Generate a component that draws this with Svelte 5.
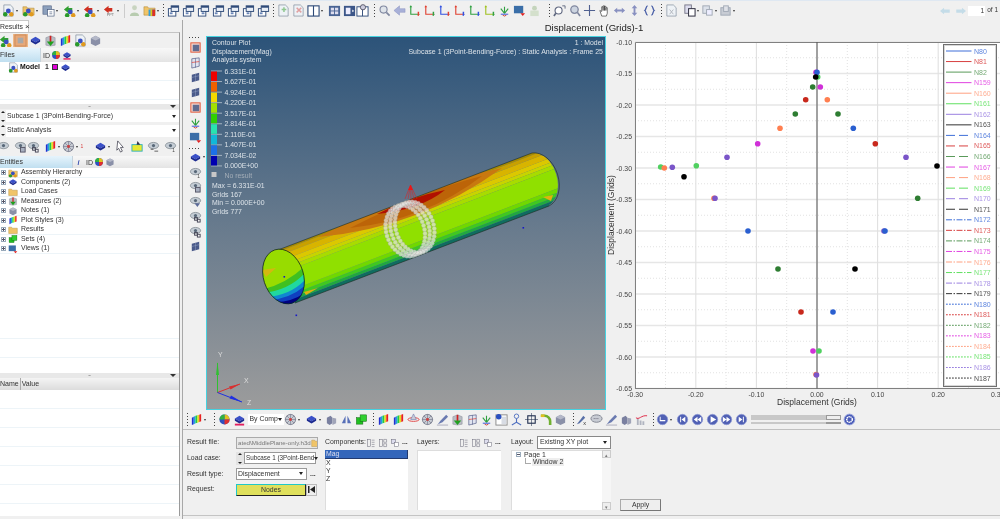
<script>
	// small toolbar glyphs, all on a 14x14 box
	const mol = (x = 0, y = 0) =>
		`<g transform="translate(${x} ${y})"><circle cx="3.5" cy="10" r="2.4" fill="#2a9a2a"/><circle cx="10" cy="10" r="2.4" fill="#e09a20"/><circle cx="6.8" cy="6.5" r="2.6" fill="#3a50c0"/></g>`;
	const folder = '<path d="M1 3h4l1 1.5h7V12H1z" fill="#f0c468" stroke="#b08838" stroke-width=".6"/>';
	const arrow = (c) => `<path d="M1 6l5-4v2.2h4V8H6v2z" fill="${c}"/>`;
	const win = (n = 0) =>
		`<rect x="1.5" y="5" width="8" height="8" fill="#fff" stroke="#2e4a78"/><rect x="4.5" y="2" width="8" height="6" fill="#e8eef6" stroke="#2e4a78"/><rect x="4.5" y="2" width="8" height="2" fill="#2e4a78"/><rect x="${3 + n}" y="9" width="3" height="2" fill="#6a86b8"/>`;
	const fence =
		'<path d="M2 5l2-1v8l-2 1z" fill="#2030d0"/><path d="M4 4l2-1v8l-2 1z" fill="#20a0e0"/><path d="M6 3l2-.6v8L6 11z" fill="#20d040"/><path d="M8 2.4l2-.6v8l-2 .6z" fill="#e8d820"/><path d="M10 1.8l2-.8v8l-2 .8z" fill="#e82020"/>';
	const cube = '<path d="M7 3l5 3-5 3-5-3z" fill="#3a50c8"/><path d="M2 6v2.4l5 3 5-3V6L7 9z" fill="#1c2a90"/>';
	const grayCube = '<path d="M7 2l5 2.5v6L7 13l-5-2.5v-6z" fill="#8a90a8"/><path d="M7 2l5 2.5L7 7 2 4.5z" fill="#b4b8c8"/>';
	const wire =
		'<circle cx="7" cy="7" r="5.5" fill="#c8ccd4" stroke="#555a70" stroke-width=".7"/><path d="M1.5 7h11M7 1.5v11M3 3l8 8M11 3l-8 8" stroke="#555a70" stroke-width=".5"/><circle cx="7" cy="7" r="1.6" fill="#d04040"/>';
	const eye = '<ellipse cx="7" cy="6" rx="5.5" ry="3.4" fill="#c4ccd4" stroke="#707880" stroke-width=".7"/><circle cx="7" cy="6" r="1.7" fill="#586878"/>';
	const page = '<path d="M2 1h7l3 3v9H2z" fill="#eef2f6" stroke="#7a8898" stroke-width=".7"/>';
	const axis = (a, b) =>
		`<path d="M3 2v9h9" fill="none" stroke="${a}" stroke-width="1.2"/><path d="M12 9l-1 0v4" stroke="${b}" stroke-width="1.2" fill="none"/><path d="M3 1.5l-1.5 2h3z" fill="${a}"/><path d="M12.8 11l-2-1.5v3z" fill="${b}"/>`;
	const play = (d) =>
		`<circle cx="7" cy="7" r="5.6" fill="#5060b4" stroke="#8c98d4" stroke-width=".8"/><path d="${d}" fill="#fff"/>`;
	const list =
		'<rect x="2" y="2" width="4" height="10" fill="none" stroke="#667" stroke-width=".7"/><path d="M8 3h4M8 6h4M8 9h4M8 12h4" stroke="#667" stroke-width=".7"/>';

	const icons = {
		mol: page + mol(0, 1),
		fmol: folder + mol(0, 1),
		folder,
		save: '<rect x="1" y="2" width="9" height="9" fill="#8ca0bc" stroke="#46587a" stroke-width=".6"/><rect x="6" y="6" width="7" height="7" fill="#fff" stroke="#46587a" stroke-width=".7"/><path d="M8 8.5h3M8 10.5h3" stroke="#46587a" stroke-width=".7"/>',
		garrow: arrow('#30a030') + mol(1, 2),
		rarrow: arrow('#d03020') + mol(1, 2),
		rppt: arrow('#d03020') + '<text x="4" y="13" font-size="4" fill="#666">PPT</text>',
		person: '<circle cx="7" cy="4" r="2.6" fill="#c8d4c0"/><path d="M2 13c0-5 10-5 10 0z" fill="#b8ccb0"/>',
		cfold: folder + '<path d="M6 6h7v7H6z" fill="#30a0e0"/><path d="M8 6h2v7H8z" fill="#e0c820"/><path d="M10 6h3v7h-3z" fill="#e03020"/>',
		win1: win(0),
		win2: win(1),
		win3: win(2),
		fadeg: page + '<path d="M5 6h5M7.5 3.500v5" stroke="#90c890" stroke-width="1.6"/>',
		fader: page + '<path d="M5 4l5 5M10 4l-5 5" stroke="#e0a0a0" stroke-width="1.6"/>',
		split: '<rect x="1" y="2" width="12" height="11" fill="#fff" stroke="#2e4a78" stroke-width="1.2"/><path d="M7 2v11" stroke="#2e4a78" stroke-width="1.2"/>',
		panes: '<rect x="1" y="2" width="12" height="11" fill="#4a6494"/><rect x="3" y="4" width="3.500" height="3" fill="#dde"/><rect x="7.500" y="4" width="3.500" height="3" fill="#dde"/><rect x="3" y="8" width="3.500" height="3" fill="#dde"/><rect x="7.500" y="8" width="3.500" height="3" fill="#dde"/>',
		pane2: '<rect x="1" y="2" width="12" height="11" fill="#3c5688"/><rect x="3" y="4" width="5" height="7" fill="#eef"/><path d="M10 6l2 1.500-2 1.500z" fill="#fff"/>',
		pane3: '<rect x="1" y="3" width="12" height="10" fill="#fff" stroke="#2e4a78"/><path d="M7 3v10" stroke="#2e4a78"/><circle cx="7.500" cy="3.500" r="2.800" fill="#ccd" stroke="#556"/>',
		search: '<circle cx="6" cy="6" r="3.800" fill="#dfe4ea" stroke="#8088a0" stroke-width="1.2"/><path d="M9 9l3.500 3.500" stroke="#8088a0" stroke-width="1.800"/>',
		back: '<path d="M1 7l6-5v3h6v4H7v3z" fill="#a8b0d8" stroke="#8890c0" stroke-width=".5"/>',
		gr: axis('#30a040', '#e04030'),
		rr: axis('#e04030', '#30a040'),
		bb: axis('#3050e0', '#e04030'),
		rb: axis('#e04030', '#3050e0'),
		gb: axis('#30a040', '#3050e0'),
		yg: axis('#a0c020', '#30a040'),
		tri: '<path d="M7 3v7M7 10l-4-5M7 10l4-5" stroke="#30a040" stroke-width="1.200" fill="none"/><path d="M3 11h8" stroke="#3050e0"/><path d="M5 12l2 1 2-1" stroke="#d04030" fill="none"/>',
		view: '<rect x="1" y="2" width="10" height="8" fill="#3a6ea8"/><path d="M8 10h5l-2.500 3z" fill="#e02020"/>',
		pers: '<circle cx="7" cy="4.500" r="2.600" fill="#c4d4bc"/><rect x="2.500" y="7" width="9" height="6" fill="#d4e0cc"/>',
		zoomb: '<circle cx="6" cy="7" r="3.800" fill="#fff" stroke="#606880" stroke-width="1.200"/><path d="M3 10l-2 3" stroke="#606880" stroke-width="1.800"/><path d="M10 2h3v3" stroke="#606880" fill="none"/>',
		zoomc: '<circle cx="7" cy="6" r="4" fill="#ccd4e0" stroke="#8088a0" stroke-width="1.400"/><path d="M10 9l3 4" stroke="#8088a0" stroke-width="1.800"/>',
		cross: '<path d="M7 1v12M1 7h12" stroke="#506090" stroke-width="1.200"/>',
		hand: '<path d="M4 13L2 7l2 1V3h1.500v4V2H7v5V2.500h1.500V7V4H10v6l-1 3z" fill="#fff" stroke="#333" stroke-width=".7"/>',
		horiz: '<path d="M1 7l3.500-3v2h5V4L13 7l-3.500 3V8h-5v2z" fill="#8890c0"/>',
		vert: '<path d="M7 1l3 3.500H8v5h2L7 13 4 9.500h2v-5H4z" fill="#8890c0"/>',
		brace: '<path d="M5 2C3 2 3.500 6 2 7c1.500 1 1 5 3 5M9 2c2 0 1.500 4 3 5-1.500 1-1 5-3 5" fill="none" stroke="#4a60a8" stroke-width="1.400"/>',
		cut: page + '<path d="M5 6l4 5M9 6l-4 5" stroke="#b0b4bc"/>',
		copy: '<rect x="2" y="1" width="7" height="9" fill="#dde" stroke="#778"/><rect x="6" y="5" width="7" height="8" fill="#fff" stroke="#334" stroke-width="1.100"/>',
		fade1: '<rect x="2" y="2" width="7" height="8" fill="#dde2ea" stroke="#a0a8b4"/><rect x="6" y="6" width="6" height="6" fill="#eef" stroke="#a0a8b4"/>',
		fade2: '<rect x="2" y="4" width="10" height="8" fill="#c8ccd4" stroke="#a0a8b4"/><rect x="5" y="2" width="5" height="6" fill="#e0e2e8" stroke="#a0a8b4"/>',
		block: '<rect x="1" y="1" width="12" height="12" fill="#e8a878" stroke="#c88858"/><path d="M4 4h6v6H4z" fill="#a8a8a8"/>',
		corner: '<path d="M3 11V7h3L12 3v7z" fill="#a8b0c0" stroke="#606880" stroke-width=".6"/><path d="M1 8l3 4 6-3" stroke="#20a040" stroke-width="1.800" fill="none"/>',
		red: '<path d="M2 4l5-2 5 2v8l-5 1-5-1z" fill="#b8bcc4" stroke="#808490" stroke-width=".5"/><path d="M7 2v7" stroke="#d02020" stroke-width="1.800"/><path d="M3 8h8l-4 5z" fill="#20a020"/>',
		fence,
		grid: '<path d="M3 3l8-1v9l-8 2z" fill="#e0e4f0" stroke="#303c70" stroke-width=".6"/><path d="M3 7l8-1" stroke="#e83020" stroke-width=".7"/><path d="M7 2.500v10" stroke="#303c70" stroke-width=".5"/>',
		gridr: '<rect x="2" y="2" width="10" height="10" fill="#f4d8d0" stroke="#e05030"/><path d="M4 4h7v7H4z" fill="#606c90"/>',
		gridb: '<path d="M3 4l8-2v8l-8 2z" fill="#4a5a8a"/><path d="M7 3v8M3 7l8-2" stroke="#98a8c8" stroke-width=".5"/>',
		cube,
		wire,
		gcube: grayCube,
		eye,
		eye1: eye + '<text x="9" y="13" font-size="5" fill="#444">1</text>',
		eye2: eye + '<path d="M4 10h3M8 12h4" stroke="#333" stroke-width=".8"/>',
		eye3: eye + '<rect x="7" y="8" width="5" height="5" fill="#a8b0c0" stroke="#556"/>',
		eye4: eye + '<path d="M6 9h6l-3 4z" fill="#5a6a98"/>',
		eye5: eye + '<rect x="6" y="8" width="3" height="3" fill="none" stroke="#445"/><rect x="9" y="10" width="3" height="3" fill="none" stroke="#445"/>',
		ball: '<circle cx="7" cy="7" r="5.500" fill="#3050c0"/><path d="M7 1.500a5.500 5.500 0 0 1 5.500 5.500H7z" fill="#e0c020"/><path d="M12.500 7A5.500 5.500 0 0 1 7 12.500V7z" fill="#e03030"/><path d="M1.500 7A5.500 5.500 0 0 1 7 1.500V7z" fill="#30b040"/>',
		cuber: cube + '<rect x="2" y="11.500" width="10" height="2" fill="#e02060"/>',
		cursor: '<path d="M4 1l6 7H7l2 4-2 1-2-4-2 2z" fill="#fff" stroke="#223" stroke-width=".7"/>',
		yellow: '<rect x="1" y="5" width="11" height="7" fill="#e8e830" stroke="#30b0c0"/><path d="M7 1l3 4H6z" fill="#334"/>',
		cubes: '<path d="M2 5l4-2 2 2v6l-3 2-3-2z" fill="#7a80a0"/><path d="M8 5l4 1v5l-4 2z" fill="#a0a4b8"/>',
		sym: '<path d="M6 3L2 11h4zM8 3l4 8H8z" fill="#5870b8"/>',
		green: '<rect x="1.500" y="5" width="7" height="7" fill="#20c020" stroke="#106010" stroke-width=".5"/><rect x="5.500" y="2" width="7" height="7" fill="#30d030" stroke="#106010" stroke-width=".5"/>',
		rb3: '<ellipse cx="7" cy="7" rx="6" ry="2" fill="none" stroke="#e04040"/><path d="M7 1l3 6H4z" fill="#c8ccd8" stroke="#5060a0" stroke-width=".5"/>',
		pen: '<path d="M2 12l3-4 6-6 2 2-6 6z" fill="#6a7ab0"/><path d="M1 13h12" stroke="#aab"/>',
		info: '<rect x="1" y="2" width="12" height="11" fill="#fff" stroke="#888"/><rect x="7" y="4" width="5" height="8" fill="#d8dce4"/><circle cx="4" cy="4" r="3" fill="#2a50c0"/>',
		tri2: '<circle cx="7" cy="3.500" r="2.400" fill="none" stroke="#5070c0"/><path d="M7 6v4L2 13M7 10l5 3" stroke="#5070c0" stroke-width="1.200" fill="none"/>',
		sq: '<rect x="3" y="3" width="8" height="8" fill="none" stroke="#223050" stroke-width="1.200"/><path d="M7 0v14M0 7h14" stroke="#223050" stroke-width=".6"/>',
		pipe: '<path d="M2 3h4a6 6 0 0 1 6 6v4" fill="none" stroke="#70b030" stroke-width="2.800"/><path d="M2 3h4" stroke="#e0c020" stroke-width="2.800"/>',
		bubble: '<ellipse cx="7" cy="6" rx="6" ry="4" fill="#c8ccd4" stroke="#808490"/><path d="M4 6h6" stroke="#667" stroke-dasharray="1 1"/>',
		fx: '<path d="M2 12l7-9 2 2-6 6z" fill="#5870a8"/><text x="9" y="13" font-size="6" fill="#333">x</text>',
		plot: '<path d="M2 13V6h2v7zM5 13V8h2v5zM8 13V9h2v4z" fill="#b0b4c0"/><path d="M1 5c3 3 6-3 12-2" stroke="#e02040" fill="none"/>',
		tl: play('M5 4v3.500h5V9H4V4z'),
		prev: play('M4.500 4h1v6h-1zM10 4v6L6 7z'),
		rew: play('M7 4v6L3 7zM11 4v6L7 7z'),
		pl: play('M5 3.500v7L11 7z'),
		ff: play('M3 4v6l4-3zM7 4v6l4-3z'),
		next: play('M4 4v6l4-3zM8.500 4h1v6h-1z'),
		gear: '<circle cx="7" cy="7" r="5.800" fill="#4a5cb8" stroke="#98a4dc"/><circle cx="7" cy="7" r="3" fill="none" stroke="#fff" stroke-width="1.600" stroke-dasharray="1.500 .6"/>',
		l1: list,
		l2: '<rect x="2" y="2" width="4" height="10" fill="none" stroke="#667" stroke-width=".7"/><path d="M8 2h4v4H8zM8 8h4v4H8z" fill="none" stroke="#667" stroke-width=".7"/>',
		l3: '<rect x="2" y="2" width="6" height="6" fill="#dde" stroke="#667" stroke-width=".7"/><rect x="6" y="6" width="6" height="6" fill="#fff" stroke="#667" stroke-width=".7"/>'
	};

	const topGroups = [
		{ cell: 'w20', items: ['mol', 'fmol', 'save', 'garrow', 'rarrow', 'rppt'], drop: true },
		{ cell: 'w15', items: ['person', 'cfold'], drop: false },
		{ cell: 'w15', items: ['win1', 'win2', 'win3', 'win1', 'win2', 'win3', 'win1'] },
		{ cell: 'w15', items: ['fadeg', 'fader', 'split', 'panes', 'pane2', 'pane3'] },
		{ cell: 'w15', items: ['search', 'back', 'gr', 'rr', 'bb', 'rb', 'gb', 'yg', 'tri', 'view', 'pers'] },
		{ cell: 'w15', items: ['zoomb', 'zoomc', 'cross', 'hand', 'horiz', 'vert', 'brace'] },
		{ cell: 'w18', items: ['cut', 'copy', 'fade1', 'fade2'] }
	];
	const panelTools = ['garrow', 'block', 'cube', 'red', 'fence', 'mol', 'gcube'];
	// widths keep the uneven spacing of this bar
	const subTools = [
		{ k: 'eye', w: 17 },
		{ k: 'eye3', w: 13 },
		{ k: 'eye5', w: 17 },
		{ k: 'fence', w: 18, drop: true },
		{ k: 'wire', w: 32, drop: true, num: true },
		{ k: 'cube', w: 20, drop: true },
		{ k: 'cursor', w: 17 },
		{ k: 'yellow', w: 16 },
		{ k: 'eye2', w: 17 },
		{ k: 'eye1', w: 15 }
	];
	const entities = [
		['fmol', 'Assembly Hierarchy'],
		['cube', 'Components (2)'],
		['folder', 'Load Cases'],
		['red', 'Measures (2)'],
		['gcube', 'Notes (1)'],
		['fence', 'Plot Styles (3)'],
		['folder', 'Results'],
		['green', 'Sets  (4)'],
		['view', 'Views (1)']
	];

	const strip = ['gridr', 'grid', 'gridb', 'gridb', 'gridr', 'tri', 'view', null, 'cube', 'eye1', 'eye3', 'eye4', 'eye5', 'eye5', 'gridb'];
	const midA = ['wire', 'cube', 'cubes', 'sym', 'green'];
	const midB = ['fence', 'fence', 'rb3', 'wire', 'pen', 'red', 'grid', 'tri', 'info', 'tri2', 'sq', 'pipe', 'gcube'];
	const midC = ['fx', 'bubble', 'pen', 'cubes', 'plot'];
	const transport = ['prev', 'rew', 'pl', 'ff', 'next'];

	// contour legend
	const bands = ['#f00000', '#f06000', '#f5d800', '#a4e000', '#30d000', '#28e4b0', '#10b8d8', '#1c70e8', '#0000b0'];
	const levels = ['6.331E-01', '5.627E-01', '4.924E-01', '4.220E-01', '3.517E-01', '2.814E-01', '2.110E-01', '1.407E-01', '7.034E-02', '0.000E+00'];

	// cylinder: A/B are the end points of the near section, D the axis
	const A = [278, 250];
	const B = [295, 303];
	const D = [254, -97];
	const at = (t, s) => [A[0] + t * (B[0] - A[0]) + s * D[0], A[1] + t * (B[1] - A[1]) + s * D[1]];
	const stripes = [
		[0, 0.035, '#a88c00'],
		[0.035, 0.1, '#c8a000'],
		[0.1, 0.2, '#d8b400'],
		[0.2, 0.28, '#dcc800'],
		[0.28, 0.34, '#c8d400'],
		[0.34, 0.41, '#a8dc00'],
		[0.41, 0.76, '#90e000'],
		[0.76, 0.83, '#70d800'],
		[0.83, 0.89, '#40c820'],
		[0.89, 0.94, '#20a840'],
		[0.94, 1.2, '#106c60']
	].map(([t0, t1, fill]) => ({
		fill,
		points: [at(t0, -0.2), at(t0, 1.2), at(t1, 1.2), at(t1, -0.2)].map((p) => p.join(',')).join(' ')
	}));

	// rigid ring of spheres around the tube
	const ring = [];
	for (const off of [-5, 0, 5]) {
		for (let i = 0; i < 40; i++) {
			const a = (i / 40) * Math.PI * 2 + off;
			const ex = 19 * Math.cos(a);
			const ey = 26 * Math.sin(a);
			ring.push({
				x: 410 + ex * 0.951 + ey * 0.309 + off * 0.934,
				y: 229 - ex * 0.309 + ey * 0.951 - off * 0.357
			});
		}
	}

	// plot
	const px = (v) => 817 + v * 606;
	const py = (v) => 42 + (-0.1 - v) * 630;
	const yTicks = Array.from({ length: 12 }, (_, i) => -0.1 - i * 0.05);
	const xTicks = [-0.3, -0.2, -0.1, 0, 0.1, 0.2];
	const orange = '#ff7f50', dark = '#2e7d32', redc = '#c8281c', purple = '#7a55c8', magenta = '#d030d8', blue = '#2a5fd0', lime = '#50d060', black = '#000';
	const dots = [
		[660.7, 167, lime], [664.3, 168, orange], [672.3, 167.3, purple], [684, 176.7, black], [696.3, 165.7, lime],
		[714, 198.3, orange], [715, 198.3, purple], [727, 157.3, purple], [757.7, 143.7, magenta], [780, 128.3, orange],
		[795.3, 114, dark], [805.7, 99.7, redc], [812.7, 87, dark], [817.7, 77, lime], [816, 72.3, magenta], [817, 72.3, blue],
		[815.7, 77, black], [820.3, 87, magenta], [827.3, 99.7, orange], [838, 114, dark], [853.3, 128.3, blue],
		[875.3, 143.7, redc], [906, 157.3, purple], [917.7, 198.3, dark], [937, 166, black],
		[748, 231, blue], [778, 269, dark], [801, 312, redc], [833, 312, blue], [884, 231, purple], [885, 231, blue], [855, 269, black],
		[813, 351, magenta], [819, 351, lime], [816, 374.5, orange], [816.5, 375, purple]
	];
	const palette = ['#3f6fd8', '#d84040', '#5a9a5a', '#e040e0', '#ffa080', '#60e060', '#9a80e0', '#333333'];
	const dashes = ['', '9 4', '6 1.5 1.5 1.5', '1.8 1.2'];
	const names = ['N80', 'N81', 'N82', ...Array.from({ length: 29 }, (_, i) => 'N' + (159 + i))];
	const legend = names.map((name, i) => ({
		name,
		color: palette[i % 8],
		dash: dashes[Math.floor(i / 8)],
		y: 51 + i * 10.55
	}));
</script>

{#snippet icon(k)}
	<svg class="ico" viewBox="0 0 14 14">{@html icons[k]}</svg>
{/snippet}
{#snippet dd()}
	<i class="dd"></i>
{/snippet}
{#snippet sep()}
	<i class="sep"></i>
{/snippet}
{#snippet combo(text, cls = '')}
	<div class="combo {cls}"><span>{text}</span><b></b></div>
{/snippet}
{#snippet spinner()}
	<div class="spin"><i></i><i></i></div>
{/snippet}

<div class="app">
	<header class="top">
		{#each topGroups as g, gi}
			{#if gi > 1}{@render sep()}{/if}
			{#if gi === 1}<i class="bar"></i>{/if}
			<div class="group {g.cell} g{gi}">
				{#each g.items as k, i}
					<div class="cell" class:wide-cell={gi === 3 && i === 2} class:tight={gi === 3 && i === 4}>
						{@render icon(k)}
						{#if g.drop || (gi === 1 && i === 1) || (gi === 3 && i === 2) || (gi === 6 && i > 0)}{@render dd()}{/if}
					</div>
				{/each}
			</div>
		{/each}
		<div class="pager">
			<svg width="26" height="10" viewBox="0 0 32 10">
				<path d="M0 5l5-4v2h7v4H5v2z" fill="#c4dce8" />
				<path d="M32 5l-5-4v2h-7v4h7v2z" fill="#c4dce8" />
			</svg>
			<span class="page-input">1</span>
			<span>of 1</span>
		</div>
	</header>

	<div class="main">
		<aside class="left">
			<div class="tabs"><div class="tab">Results <span>×</span></div></div>
			<div class="panel">
				<div class="tools">
					{#each panelTools as k, i}
						<div class="tool" class:on={i === 1}>{@render icon(k)}</div>
					{/each}
				</div>
				<div class="head files">
					<span class="h-files">Files</span>
					<span class="h-id">ID</span>
					{@render icon('ball')}
					{@render icon('cuber')}
				</div>
				<div class="rows files-rows">
					<div class="model">
						{@render icon('mol')}
						<b>Model</b>
						<span>1</span>
						<i class="swatch"></i>
						{@render icon('cube')}
					</div>
				</div>
				<div class="grip"><span>▪▪</span><b></b></div>
				<div class="sel">{@render spinner()}{@render combo('Subcase 1 (3Point-Bending-Force)')}</div>
				<div class="sel">{@render spinner()}{@render combo('Static Analysis')}</div>
				<div class="tools sub">
					{#each subTools as t}
						<div class="stool" style:width="{t.w}px">
							{@render icon(t.k)}
							{#if t.drop}{@render dd()}{/if}
							{#if t.num}<span class="num">1</span>{/if}
						</div>
					{/each}
				</div>
				<div class="head ents">
					<span class="h-ent">Entities</span>
					<span class="h-i">i</span>
					<span class="h-id">ID</span>
					{@render icon('ball')}
					{@render icon('gcube')}
				</div>
				<div class="rows tree">
					{#each entities as [k, label]}
						<div class="node">
							<i class="plus"></i>
							{@render icon(k)}
							<span>{label}</span>
						</div>
					{/each}
				</div>
				<div class="grip"><span>▪▪</span><b></b></div>
				<div class="head props"><span>Name</span><span>Value</span></div>
				<div class="rows wide"></div>
			</div>
		</aside>

		<section class="work">
			<h1 class="title">Displacement (Grids)-1</h1>
			<div class="stage">
				<nav class="strip">
					<i class="dots"></i>
					{#each strip as k}
						{#if k}
							<div class="scell">{@render icon(k)}{#if k === 'cube'}{@render dd()}{/if}</div>
						{:else}
							<i class="dots"></i>
						{/if}
					{/each}
				</nav>

				<svg class="view" viewBox="206 36 400 374" font-family="Liberation Sans, Arial, sans-serif" font-size="6.9">
					<defs>
						<linearGradient id="sky" x1="0" x2="0" y1="0" y2="1">
							<stop offset="0" stop-color="#2c5379" />
							<stop offset="0.5" stop-color="#677a8d" />
							<stop offset="1" stop-color="#9c9c9c" />
						</linearGradient>
						<clipPath id="tube">
							<path d="M278 250L532 153L549 206L295 303Z" />
							<ellipse cx="537" cy="180" rx="20" ry="28" transform="rotate(-18 537 180)" />
						</clipPath>
						<clipPath id="mouth">
							<ellipse cx="283.5" cy="276.5" rx="20" ry="28" transform="rotate(-18 283.5 276.5)" />
						</clipPath>
					</defs>
					<rect x="206" y="36" width="400" height="374" fill="url(#sky)" />
					<rect x="206.5" y="36.5" width="399" height="373" fill="none" stroke="#45d2e0" />

					<g fill="#dbe2e8">
						<text x="212" y="45">Contour Plot</text>
						<text x="212" y="53.7">Displacement(Mag)</text>
						<text x="212" y="62.3">Analysis system</text>
						<text x="603" y="45" text-anchor="end">1 : Model</text>
						<text x="603" y="54" text-anchor="end" font-size="7">Subcase 1 (3Point-Bending-Force) : Static Analysis : Frame 25</text>
						{#each levels as l, i}
							<text x="224.5" y={73.5 + i * 10.55}>{l}</text>
							<line x1="211" x2="222" y1={71 + i * 10.55} y2={71 + i * 10.55} stroke="#ccd4dc" stroke-width=".7" />
						{/each}
						<text x="224.5" y="177.5" fill="#a4aeb8">No result</text>
						<text x="212" y="188">Max = 6.331E-01</text>
						<text x="212" y="196.5">Grids 167</text>
						<text x="212" y="204.8">Min = 0.000E+00</text>
						<text x="212" y="213.5">Grids 777</text>
					</g>
					{#each bands as c, i}
						<rect x="211" y={71.5 + i * 10.55} width="6" height="9.6" fill={c} />
					{/each}
					<rect x="211.5" y="172" width="5" height="5" fill="#c8c8c8" />

					<!-- tube -->
					<g clip-path="url(#tube)">
						{#each stripes as s}
							<polygon points={s.points} fill={s.fill} />
						{/each}
						<path d="M318 237Q420 228 502 168Q430 182 318 237Z" fill="#c87810" />
						<path d="M350 228Q425 220 482 176Q425 190 350 228Z" fill="#bc6408" />
						<path d="M377 214Q420 210 445 190Q410 197 377 214Z" fill="#b01000" />
						<path d="M304 292l14-4-12 7z" fill="#e0b010" />
						<path d="M543 197l10-2-2 6z" fill="#e0b010" />
					</g>
					<path d="M278 250L532 153A20 28 -18 0 1 549 206L295 303" fill="none" stroke="#1c2a20" stroke-width=".6" />
					<g clip-path="url(#mouth)">
						<rect x="260" y="245" width="50" height="62" fill="#98dc00" />
						<path d="M262 270l14-2-10 9z" fill="#d4b810" />
						<path d="M260 290Q285 285 305 266V310H260Z" fill="#40c020" />
						<path d="M262 293Q288 291 305 273V310H262Z" fill="#20d8a0" />
						<path d="M266 297Q290 296 306 279V310H266Z" fill="#1088d0" />
						<path d="M270 300Q290 299 306 285V310H270Z" fill="#1040c0" />
						<path d="M276 302Q292 302 306 292V310H276Z" fill="#000080" />
					</g>
					<ellipse cx="283.5" cy="276.5" rx="20" ry="28" transform="rotate(-18 283.5 276.5)" fill="none" stroke="#10201c" stroke-width=".7" />

					<!-- load arrow and ring -->
					<g stroke="#e81818" stroke-width=".5">
						<line x1="410.5" y1="185" x2="405" y2="199" />
						<line x1="410.5" y1="185" x2="408" y2="199" />
						<line x1="410.5" y1="185" x2="411" y2="199" />
						<line x1="410.5" y1="185" x2="414" y2="199" />
						<line x1="410.5" y1="185" x2="417" y2="199" />
					</g>
					<path d="M410.5 185l-2.500 5h5z" fill="#e81818" />
					{#each ring as r}
						<circle cx={r.x} cy={r.y} r="2.2" fill="#e8e8e4" fill-opacity=".7" stroke="#9a9c98" stroke-width=".3" />
					{/each}

					<g fill="#1818c8">
						<rect x="283.5" y="276" width="1.6" height="1.6" />
						<rect x="295.5" y="314.5" width="1.6" height="1.6" />
						<rect x="522.5" y="227" width="1.6" height="1.6" />
					</g>

					<!-- triad -->
					<line x1="217.5" y1="392.5" x2="217.5" y2="363" stroke="#30c030" />
					<path d="M217.5 362l-1.500 13h3z" fill="#30c030" />
					<line x1="217.5" y1="392.5" x2="240" y2="384" stroke="#d83030" />
					<path d="M240 384l-11 2.500 1.500 3z" fill="#d83030" />
					<line x1="217.5" y1="392.5" x2="242" y2="402" stroke="#2030e0" />
					<path d="M242 402l-11-6.500-1.500 3z" fill="#2030e0" />
					<g fill="#dcdcdc">
						<text x="218" y="357">Y</text>
						<text x="244" y="383">X</text>
						<text x="247" y="405">Z</text>
					</g>
				</svg>

				<svg class="plot" viewBox="606 36 394 374" font-family="Liberation Sans, Arial, sans-serif">
					<rect x="635" y="42" width="365" height="346.5" fill="#fff" />

					{#each yTicks as t, i}
						<line x1="635" x2="1000" y1={py(t)} y2={py(t)} stroke="#e6e6e6" stroke-width="1.3" />
						{#if i < 11}
							<line x1="635" x2="1000" y1={py(t) + 15.75} y2={py(t) + 15.75} stroke="#e2e2e2" stroke-dasharray="1 2" />
						{/if}
						<text x="632" y={py(t) + 2.5} text-anchor="end" font-size="6.9" fill="#444">{t.toFixed(2)}</text>
					{/each}
					{#each xTicks as t}
						<line x1={px(t)} x2={px(t)} y1="42" y2="388.5" stroke="#e0e0e0" stroke-width="1.1" />
						<line x1={px(t) + 30.3} x2={px(t) + 30.3} y1="42" y2="388.5" stroke="#e2e2e2" stroke-dasharray="1 2" />
						<text x={px(t)} y="396.5" text-anchor="middle" font-size="6.9" fill="#444">{t.toFixed(2)}</text>
					{/each}
					<text x="991" y="396.5" font-size="6.9" fill="#444">0.3</text>

					<path d="M635.5 388.5V42.500H1000M635 388.5H1000" fill="none" stroke="#808080" />
					<line x1="817" x2="817" y1="42" y2="388.5" stroke="#555" />

					{#each dots as [x, y, c]}
						<circle cx={x} cy={y} r="2.8" fill={c} />
					{/each}

					<text x="817" y="405" text-anchor="middle" font-size="8.5" fill="#333">Displacement (Grids)</text>
					<text transform="translate(614 215) rotate(-90)" text-anchor="middle" font-size="8.5" fill="#333">Displacement (Grids)</text>

					<rect x="943.5" y="44.5" width="53" height="342" fill="#fff" stroke="#707070" />
					<rect x="944.5" y="45.5" width="51" height="340" fill="none" stroke="#d8d8d8" />
					{#each legend as l}
						<line x1="946" x2="971.5" y1={l.y} y2={l.y} stroke={l.color} stroke-width="1" stroke-dasharray={l.dash} />
						<text x="974" y={l.y + 2.5} font-size="7" fill={l.color} fill-opacity=".85">{l.name}</text>
					{/each}
				</svg>
			</div>

			<div class="mid">
				{@render sep()}
				<div class="cell fc">{@render icon('fence')}{@render dd()}</div>
				{@render sep()}
				<div class="cell w15 bl">{@render icon('ball')}</div>
				<div class="cell w15">{@render icon('cuber')}</div>
				<div class="combo by"><span>By Comp</span><b></b></div>
				<div class="mid-a">
					{#each midA as k, i}
						<div class="cell {i < 2 ? 'wd' : 'w15'}">{@render icon(k)}{#if i < 2}{@render dd()}{/if}</div>
					{/each}
				</div>
				{@render sep()}
				<div class="mid-b">
					{#each midB as k}
						<div class="cell w145">{@render icon(k)}</div>
					{/each}
				</div>
				{@render sep()}
				<div class="mid-c">
					{#each midC as k}
						<div class="cell w15">{@render icon(k)}</div>
					{/each}
				</div>
				{@render sep()}
				<div class="cell tl">{@render icon('tl')}{@render dd()}</div>
				{#each transport as k}
					<div class="cell w145">{@render icon(k)}</div>
				{/each}
				<div class="slider"><div class="track"><i></i></div><div class="track thin"><i></i></div></div>
				<div class="cell w145">{@render icon('gear')}</div>
			</div>

			<form class="form">
				<div class="f1">
					<label for="rf">Result file:</label>
					<div class="file" id="rf"><span>ated\MiddlePlane-only.h3d</span>{@render icon('folder')}</div>
					<label for="lc">Load case:</label>
					<div class="lc" id="lc">{@render spinner()}{@render combo('Subcase 1 (3Point-Bend')}</div>
					<label for="rt">Result type:</label>
					<div class="rt" id="rt">{@render combo('Displacement')}<em>...</em></div>
					<label for="rq">Request:</label>
					<div class="rq" id="rq"><div class="nodes">Nodes</div><div class="last"><svg width="7" height="7" viewBox="0 0 7 7"><path d="M0 0h1.500v7H0zM7 0v7L2 3.500z" fill="#222" /></svg></div></div>
				</div>
				<div class="f2">
					<div class="lh"><span>Components:</span><div class="mini">{@render icon('l1')}{@render icon('l2')}{@render icon('l3')}<em>...</em></div></div>
					<div class="box comps">
						<div class="picked">Mag</div>
						<div>X</div>
						<div>Y</div>
						<div>Z</div>
					</div>
				</div>
				<div class="f3">
					<div class="lh"><span>Layers:</span><div class="mini">{@render icon('l1')}{@render icon('l2')}{@render icon('l3')}<em>...</em></div></div>
					<div class="box"></div>
				</div>
				<div class="f4">
					<div class="lh"><span>Layout:</span>{@render combo('Existing XY plot', 'existing')}</div>
					<div class="box pages">
						<div class="pg"><i class="minus"></i>Page 1</div>
						<div class="pg win"><i class="elbow"></i><span>Window 2</span></div>
						<div class="scroll"><i>▴</i><i>▾</i></div>
					</div>
				</div>
				<button class="apply" type="button">Apply</button>
			</form>
		</section>
	</div>
</div>

<style>
	:global(body) {
		margin: 0;
		background: #f0f0f0;
	}

	.app {
		width: 1000px;
		height: 519px;
		display: flex;
		flex-direction: column;
		overflow: hidden;
		background: #f0f0f0;
		color: #333;
		font: 6.9px/1 'Liberation Sans', Arial, sans-serif;
		filter: blur(0.3px);
	}

	.ico {
		width: 13px;
		height: 13px;
		flex: none;
	}

	.dd {
		flex: none;
		width: 0;
		height: 0;
		margin-left: 1px;
		border: 1.5px solid transparent;
		border-top: 2px solid #333;
		border-bottom: 0;
	}

	.sep {
		flex: none;
		width: 1px;
		height: 14px;
		margin: 0 3px 0 1px;
		background: repeating-linear-gradient(#444 0 1px, transparent 1px 3px);
	}

	.bar {
		flex: none;
		width: 1px;
		height: 14px;
		margin: 0 3px 0 1px;
		background: #ccc;
	}

	/* top toolbar */
	.top {
		height: 20px;
		flex: none;
		display: flex;
		align-items: center;
		padding-left: 2px;
		border-top: 1px solid #dfe8f2;
		box-sizing: border-box;
	}

	.group,
	.mid-a,
	.mid-b,
	.mid-c {
		display: flex;
		align-items: center;
	}

	.g1 {
		margin-right: 4px;
	}

	.g3 {
		margin-right: 2px;
	}

	.g4 {
		margin-right: 5px;
	}

	.g5 {
		margin-right: 1.5px;
	}

	.cell {
		display: flex;
		align-items: center;
		flex: none;
	}

	.w20 .cell {
		width: 20.2px;
	}

	.w15 .cell,
	.cell.w15 {
		width: 15px;
	}

	.w15 .cell.wide-cell {
		width: 21px;
	}

	.w15 .cell.tight {
		width: 13px;
	}

	.w18 .cell {
		width: 18px;
	}

	.cell.w145 {
		width: 14.75px;
	}

	.cell.wd {
		width: 20.5px;
	}

	.pager {
		margin-left: auto;
		display: flex;
		align-items: center;
		gap: 2px;
		padding-right: 2px;
		font-size: 6.5px;
	}

	.page-input {
		width: 17px;
		height: 10px;
		line-height: 10px;
		text-align: right;
		background: #fff;
		box-sizing: border-box;
		padding-right: 1px;
	}

	.main {
		flex: 1;
		display: flex;
		min-height: 0;
	}

	/* left column */
	.left {
		width: 183px;
		flex: none;
		display: flex;
		flex-direction: column;
		border-right: 1px solid #a8a8a8;
		box-sizing: border-box;
		padding-bottom: 3px;
	}

	.tabs {
		height: 12px;
		flex: none;
	}

	.tab {
		width: 29px;
		height: 12px;
		box-sizing: border-box;
		padding: 3px 0 0 0;
		background: #fff;
		border: 1px solid #c8c8c8;
		border-width: 1px 1px 0 0;
		white-space: nowrap;
	}

	.tab span {
		font-size: 8px;
		line-height: 5px;
	}

	.panel {
		flex: 1;
		width: 179px;
		display: flex;
		flex-direction: column;
		min-height: 0;
		border-right: 1px solid #9a9a9a;
		border-top: 1px solid #c4c4c4;
		overflow: hidden;
	}

	.tools {
		height: 15px;
		flex: none;
		display: flex;
		align-items: center;
		margin-left: -2.5px;
	}

	.tool {
		flex: none;
		width: 15px;
		display: flex;
		align-items: center;
		justify-content: center;
	}

	.tool.on {
		background: #f0b888;
	}

	.tools.sub {
		height: 17px;
		margin-left: -3.5px;
		margin-bottom: 1px;
	}

	.stool {
		flex: none;
		display: flex;
		align-items: center;
	}

	.num {
		margin-left: 3px;
		color: #d84040;
		font-size: 5px;
	}

	.head {
		flex: none;
		height: 14px;
		display: flex;
		align-items: center;
		background: linear-gradient(#f8f8f8, #e4e4e4);
		font-size: 7px;
	}

	.head.ents {
		height: 12px;
	}

	.h-files {
		width: 41px;
		height: 100%;
		line-height: 14px;
		background: linear-gradient(#e6f4fc, #c0dff0);
		border-right: 1px solid #c8d4dc;
		box-sizing: border-box;
	}

	.h-ent {
		width: 73px;
		height: 100%;
		line-height: 12px;
		background: linear-gradient(#e6f4fc, #c0dff0);
		border-right: 1px solid #c8d4dc;
		box-sizing: border-box;
	}

	.h-i {
		width: 11px;
		color: #3a50b0;
		text-align: center;
		font-style: italic;
		font-weight: 700;
	}

	.h-id {
		padding: 0 1px 0 2px;
	}

	.head .ico {
		width: 10px;
		height: 10px;
		margin-right: 1px;
	}

	.rows {
		background: repeating-linear-gradient(#fff 0 9px, #edf4f8 9px 9.5px);
	}

	.files-rows {
		height: 42px;
		flex: none;
	}

	.model {
		display: flex;
		align-items: center;
		height: 10px;
		padding-left: 8px;
	}

	.model b {
		margin-left: 1px;
		width: 25px;
		color: #111;
	}

	.model span {
		width: 7px;
		font-weight: 700;
	}

	.model .ico {
		width: 11px;
		height: 11px;
	}

	.swatch {
		width: 6px;
		height: 6px;
		margin-right: 2px;
		background: #e000d8;
		border: 1px solid #333;
		box-sizing: border-box;
	}

	.grip {
		flex: none;
		height: 5px;
		position: relative;
		background: #e8e8e8;
		text-align: center;
		font-size: 3px;
		line-height: 5px;
		color: #666;
	}

	.grip b {
		position: absolute;
		right: 3px;
		top: 1px;
		border: 3px solid transparent;
		border-top: 3px solid #333;
		border-bottom: 0;
	}

	.sel {
		flex: none;
		height: 14.5px;
		display: flex;
		align-items: center;
	}

	.spin {
		width: 6px;
		height: 13px;
		flex: none;
		display: flex;
		flex-direction: column;
		justify-content: space-between;
		align-items: center;
		padding: 1px 0;
		box-sizing: border-box;
	}

	.spin i {
		border: 2px solid transparent;
		border-bottom: 2.5px solid #222;
		border-top: 0;
	}

	.spin i + i {
		transform: scaleY(-1);
	}

	.combo {
		flex: 1;
		height: 12px;
		min-width: 0;
		display: flex;
		align-items: center;
		justify-content: space-between;
		background: #fff;
		padding: 0 3px 0 1px;
		white-space: nowrap;
		box-sizing: border-box;
	}

	.combo b {
		flex: none;
		border: 2.5px solid transparent;
		border-top: 3px solid #222;
		border-bottom: 0;
	}

	.tree {
		flex: none;
		height: 205px;
	}

	.node {
		height: 9.5px;
		display: flex;
		align-items: center;
		padding-left: 1px;
	}

	.node .ico {
		width: 10px;
		height: 10px;
		margin: 0 3px 0 2px;
	}

	.plus,
	.minus {
		flex: none;
		width: 5px;
		height: 5px;
		box-sizing: border-box;
		border: 1px solid #9ab;
		background: linear-gradient(#556, #556) center / 3px 1px no-repeat, linear-gradient(#556, #556) center / 1px 3px no-repeat, #fff;
	}

	.head.props {
		height: 12px;
		gap: 1px;
		background: linear-gradient(#f4f4f4, #dcdcdc);
	}

	.props span {
		padding-right: 1px;
		border-right: 1px solid #aaa;
		line-height: 12px;
	}

	.props span + span {
		border: 0;
	}

	.wide {
		flex: 1;
	}

	/* graphics area */
	.work {
		flex: 1;
		display: flex;
		flex-direction: column;
		min-width: 0;
	}

	.title {
		height: 16px;
		flex: none;
		margin: 0;
		padding-left: 5px;
		line-height: 16px;
		text-align: center;
		font-size: 9.6px;
		font-weight: 400;
		color: #222;
	}

	.stage {
		height: 374px;
		flex: none;
		display: flex;
	}

	.strip {
		width: 23px;
		flex: none;
		display: flex;
		flex-direction: column;
		align-items: flex-start;
		padding-left: 6px;
		box-sizing: border-box;
	}

	.scell {
		height: 14.9px;
		display: flex;
		align-items: center;
		flex: none;
	}

	.dots {
		flex: none;
		width: 12px;
		height: 1px;
		margin: 3px 0 1px;
		background: repeating-linear-gradient(90deg, #444 0 1px, transparent 1px 3px);
	}

	.dots:first-child {
		margin: 1px 0 2.5px;
	}

	.view {
		width: 400px;
		height: 374px;
		flex: none;
		display: block;
	}

	.plot {
		width: 394px;
		height: 374px;
		flex: none;
		display: block;
	}

	.mid {
		height: 19px;
		flex: none;
		display: flex;
		align-items: center;
		padding-left: 3px;
		border-bottom: 1px solid #c0c0c0;
		box-sizing: content-box;
	}

	.mid .sep {
		margin: 0 3.5px 0 1px;
	}

	.cell.fc {
		width: 23.5px;
		margin-left: -2px;
	}

	.cell.bl {
		margin-left: -1px;
	}

	.cell.tl {
		width: 20px;
		margin-left: -1px;
	}

	.mid-a {
		margin-right: 1.5px;
	}

	.mid-b {
		margin-right: 2.75px;
	}

	.mid-c {
		margin: 0 1.5px 0 -2px;
	}

	.combo.by {
		flex: none;
		width: 36px;
		margin-right: 0.5px;
		height: 11px;
		padding-left: 2px;
	}

	.slider {
		width: 90px;
		margin: 0 2px 0 1px;
		display: flex;
		flex-direction: column;
		gap: 2px;
		flex: none;
	}

	.track {
		height: 5px;
		background: #c8c8c8;
		position: relative;
	}

	.track.thin {
		height: 2px;
	}

	.track i {
		position: absolute;
		right: 0;
		top: 0;
		width: 15px;
		height: 100%;
		background: #eee;
		border: 1px solid #999;
		box-sizing: border-box;
	}

	/* form */
	.form {
		flex: none;
		height: 86px;
		margin: 0;
		display: flex;
		padding: 5px 0 0 4px;
		box-sizing: border-box;
		border-bottom: 1px solid #c4c4c4;
	}

	.f1 {
		width: 131px;
		flex: none;
		display: grid;
		grid-template-columns: 49px 1fr;
		grid-auto-rows: 15.6px;
		align-items: center;
		align-self: flex-start;
	}

	.file {
		height: 12px;
		display: flex;
		align-items: center;
		justify-content: space-between;
		border: 1px solid #aaa;
		background: #e8e8e8;
		color: #777;
		white-space: nowrap;
		overflow: hidden;
		box-sizing: border-box;
		padding-left: 1px;
	}

	.file .ico {
		width: 10px;
		height: 10px;
	}

	.file span {
		font-size: 6.2px;
	}

	.lc,
	.rt {
		display: flex;
		align-items: center;
	}

	.lc .spin {
		width: 8px;
		background: #e4e4e4;
	}

	.lc .combo,
	.rt .combo {
		border: 1px solid #999;
		height: 12px;
		flex: none;
	}

	.lc .combo {
		width: 72px;
		font-size: 6.3px;
	}

	.rt .combo {
		width: 71px;
	}

	em {
		font-style: normal;
		font-weight: 700;
		margin-left: 3px;
	}

	.rq {
		display: flex;
		align-items: center;
	}

	.nodes {
		width: 70px;
		height: 12px;
		line-height: 9px;
		text-align: center;
		background: #dfe05c;
		border: 1px solid #20c8c8;
		border-right-color: #222;
		border-bottom-color: #222;
		box-sizing: border-box;
	}

	.last {
		width: 11px;
		height: 12px;
		display: flex;
		align-items: center;
		justify-content: center;
		background: #eee;
		border: 1px solid #bbb;
		box-sizing: border-box;
	}

	.f2 {
		width: 83px;
		margin-left: 7px;
		flex: none;
	}

	.f3 {
		width: 84px;
		margin-left: 9px;
		flex: none;
	}

	.f4 {
		width: 100px;
		margin-left: 10px;
		flex: none;
	}

	.lh {
		height: 15px;
		display: flex;
		align-items: center;
		justify-content: space-between;
	}

	.mini {
		display: flex;
		align-items: center;
		gap: 2px;
	}

	.mini .ico {
		width: 10px;
		height: 10px;
	}

	.mini em {
		width: 6px;
		margin: 0;
	}

	.box {
		height: 60px;
		background: #fff;
		position: relative;
		line-height: 8px;
		box-sizing: border-box;
		box-shadow: inset 1px 1px 0 #ddd;
	}

	.picked {
		background: #3366bb;
		color: #dde;
		border: 1px solid #223a70;
		border-width: 0 1px 1px 0;
		box-sizing: border-box;
		height: 9px;
	}

	.comps {
		padding-left: 1px;
	}

	.comps .picked {
		margin-left: -1px;
		padding-left: 1px;
	}

	.combo.existing {
		flex: none;
		width: 74px;
		height: 13px;
		border: 1px solid #888;
		padding-left: 2px;
	}

	.pg {
		display: flex;
		align-items: center;
		gap: 3px;
		height: 7.5px;
		padding: 0 0 0 5px;
	}

	.pages {
		padding-top: 1px;
	}

	.minus {
		background: linear-gradient(#556, #556) center / 3px 1px no-repeat, #fff;
	}

	.win {
		padding-left: 14px;
		gap: 1px;
	}

	.elbow {
		width: 5px;
		height: 5px;
		border: 1px solid #aaa;
		border-width: 0 0 1px 1px;
		margin-top: -3px;
	}

	.win span {
		background: #eee;
		padding: 0 1px;
	}

	.scroll {
		position: absolute;
		right: 0;
		top: 0;
		bottom: 0;
		width: 9px;
		display: flex;
		flex-direction: column;
		justify-content: space-between;
		background: #f6f6f6;
		font-size: 5px;
		text-align: center;
		color: #777;
	}

	.scroll i {
		font-style: normal;
		height: 8px;
		background: #eee;
		border: 1px solid #ccc;
		box-sizing: border-box;
	}

	.apply {
		width: 41px;
		height: 12px;
		margin: 64px 0 0 9px;
		padding: 0;
		flex: none;
		background: #eee;
		border: 1px solid #aaa;
		border-right-color: #777;
		border-bottom-color: #777;
		color: #333;
		font: 6.9px/1 'Liberation Sans', Arial, sans-serif;
	}
</style>
